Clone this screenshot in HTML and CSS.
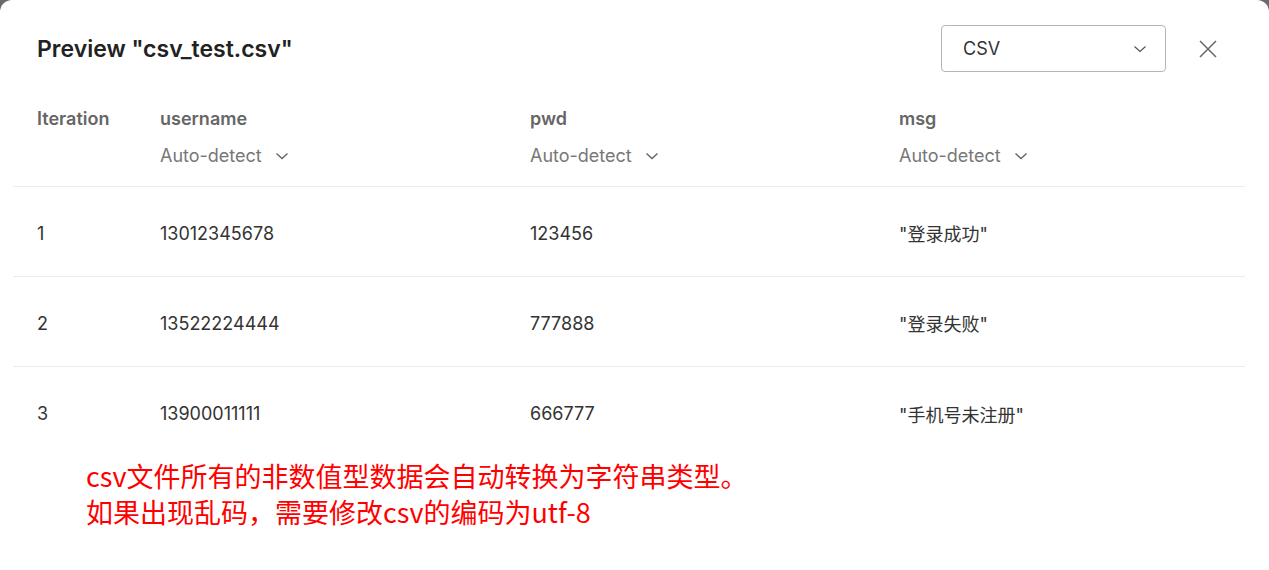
FILE: index.html
```html
<!DOCTYPE html>
<html lang="zh-CN">
<head>
    <meta charset="UTF-8">
    <title>Preview csv_test.csv</title>
    <link rel="stylesheet" href="styles.css">
</head>
<body>
    <div class="modal">
        <div class="modal-header">
            <h1 class="title">Preview "csv_test.csv"</h1>
            <div class="select">
                <span>CSV</span>
                <svg width="14" height="14" viewBox="0 0 14 14"><path d="M1.5 4.5 L7 9.5 L12.5 4.5" fill="none" stroke="#555" stroke-width="1.2"/></svg>
            </div>
            <button class="close" type="button" aria-label="close">
                <svg width="18" height="18" viewBox="0 0 18 18"><path d="M1 1 L17 17 M17 1 L1 17" stroke="#666" stroke-width="1.5" fill="none"/></svg>
            </button>
        </div>

        <div class="table">
            <div class="row head">
                <div class="cell"><div class="col-name">Iteration</div></div>
                <div class="cell">
                    <div class="col-name">username</div>
                    <div class="type">Auto-detect <svg width="14" height="14" viewBox="0 0 14 14"><path d="M1.5 4.5 L7 9.5 L12.5 4.5" fill="none" stroke="#666" stroke-width="1.4"/></svg></div>
                </div>
                <div class="cell">
                    <div class="col-name">pwd</div>
                    <div class="type">Auto-detect <svg width="14" height="14" viewBox="0 0 14 14"><path d="M1.5 4.5 L7 9.5 L12.5 4.5" fill="none" stroke="#666" stroke-width="1.4"/></svg></div>
                </div>
                <div class="cell">
                    <div class="col-name">msg</div>
                    <div class="type">Auto-detect <svg width="14" height="14" viewBox="0 0 14 14"><path d="M1.5 4.5 L7 9.5 L12.5 4.5" fill="none" stroke="#666" stroke-width="1.4"/></svg></div>
                </div>
            </div>
            <div class="row">
                <div class="cell">1</div>
                <div class="cell">13012345678</div>
                <div class="cell">123456</div>
                <div class="cell">"登录成功"</div>
            </div>
            <div class="row">
                <div class="cell">2</div>
                <div class="cell">13522224444</div>
                <div class="cell">777888</div>
                <div class="cell">"登录失败"</div>
            </div>
            <div class="row last">
                <div class="cell">3</div>
                <div class="cell">13900011111</div>
                <div class="cell">666777</div>
                <div class="cell">"手机号未注册"</div>
            </div>
        </div>

        <div class="note">
            csv文件所有的非数值型数据会自动转换为字符串类型。<br>
            如果出现乱码，需要修改csv的编码为utf-8
        </div>
    </div>
</body>
</html>
```

FILE: styles.css
```css
* {
    box-sizing: border-box;
    margin: 0;
    padding: 0;
}
html, body {
    height: 100%;
}
body {
    background: #6b6b6b;
    font-family: Inter, "Noto Sans CJK SC", sans-serif;
    color: #333333;
    overflow: hidden;
}
.modal {
    background: #ffffff;
    border-radius: 12px 12px 0 0;
    height: 100%;
}
.modal-header {
    display: flex;
    align-items: center;
    padding: 25px 49px 0 37px;
}
.title {
    flex: 1;
    font-size: 23px;
    font-weight: 600;
    color: #222222;
}
.select {
    width: 225px;
    height: 47px;
    border: 1px solid #b5b5b5;
    border-radius: 4px;
    display: flex;
    align-items: center;
    justify-content: space-between;
    padding: 0 18px 0 21px;
    font-size: 18px;
    color: #333333;
}
.close {
    margin-left: 30px;
    width: 24px;
    height: 24px;
    border: none;
    background: none;
    display: flex;
    align-items: center;
    justify-content: center;
}
.table {
    margin: 35px 24px 0 13px;
}
.row {
    display: grid;
    grid-template-columns: 123px 370px 369px 1fr;
    padding-left: 24px;
    padding-top: 3px;
    border-bottom: 1px solid #ebebeb;
    height: 90px;
    align-items: center;
    font-size: 18px;
    color: #333333;
}
.row.head {
    height: 80px;
    padding-top: 0;
    align-items: start;
}
.row.last {
    border-bottom: none;
}
.col-name {
    font-weight: 600;
    color: #666666;
    line-height: 24px;
}
.type {
    margin-top: 13px;
    line-height: 24px;
    color: #777777;
    display: flex;
    align-items: center;
    gap: 13px;
}
.note {
    margin-top: 1px;
    padding-left: 86px;
    font-family: "Noto Sans CJK SC", sans-serif;
    font-size: 27px;
    line-height: 36px;
    color: #ff0000;
}
```
